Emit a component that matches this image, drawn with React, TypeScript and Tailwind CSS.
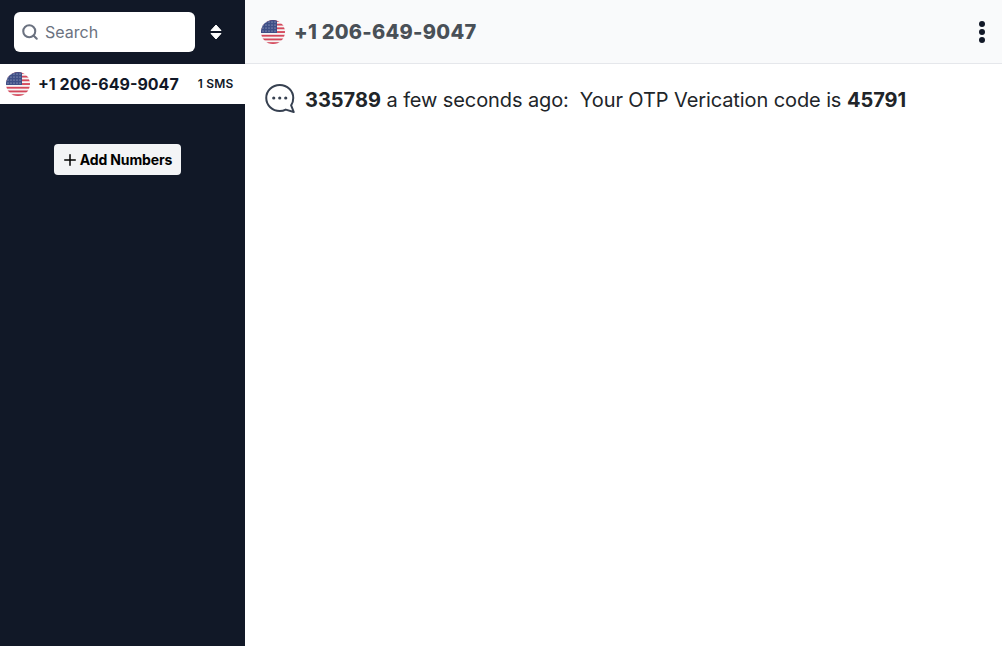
import { Search, Plus } from "lucide-react";

function UsFlag({ className }: { className?: string }) {
  const stripes = [0, 1, 2, 3, 4, 5, 6];
  return (
    <svg className={className} viewBox="0 0 24 24">
      <defs>
        <clipPath id="flagClip">
          <circle cx="12" cy="12" r="12" />
        </clipPath>
      </defs>
      <g clipPath="url(#flagClip)">
        <rect width="24" height="24" fill="#f5f5f5" />
        {stripes.map((i) => (
          <rect key={i} x="0" y={i * 3.7} width="24" height="1.85" fill="#d4475a" />
        ))}
        <rect width="16" height="13" fill="#3f4f86" />
        {[2, 5, 8, 11].map((y) =>
          [2, 5, 8, 11, 14].map((x) => (
            <circle key={`${x}-${y}`} cx={x} cy={y} r="0.55" fill="#c5cbe0" />
          )),
        )}
      </g>
    </svg>
  );
}

function ChatIcon({ className }: { className?: string }) {
  return (
    <svg className={className} viewBox="1 1.5 29.500 29" fill="none" stroke="currentColor" strokeWidth="2" strokeLinejoin="round">
      <path d="M15.5 2.5C8 2.5 2 8.3 2 15.5S8 28.5 15.5 28.5c2.2 0 4.2-.5 6-1.4l8 2.4-2.6-6.6c1.4-2.1 2.1-4.6 2.1-7.4 0-7.200-6-13-13.500-13z" />
      <circle cx="9.500" cy="15.500" r="1.600" fill="currentColor" stroke="none" />
      <circle cx="15.500" cy="15.500" r="1.600" fill="currentColor" stroke="none" />
      <circle cx="21.500" cy="15.500" r="1.600" fill="currentColor" stroke="none" />
    </svg>
  );
}

export default function App() {
  return (
    <div className="flex h-[646px] w-[1002px] overflow-hidden bg-white font-['Inter',sans-serif]">
      {/* Sidebar */}
      <aside className="flex w-[245px] shrink-0 flex-col bg-[#111827]">
        <div className="flex h-16 items-center pl-[14px]">
          <div className="flex h-10 w-[181px] items-center gap-[6px] rounded-md bg-white pl-[7px]">
            <Search className="h-[18px] w-[18px] text-[#6b7280]" strokeWidth={2.75} />
            <span className="text-base text-[#6b7280]">Search</span>
          </div>
          <svg className="ml-[15px] h-4 w-3" viewBox="0 0 12 16" fill="#ffffff" stroke="#ffffff" strokeWidth="1" strokeLinejoin="round">
            <path d="M6 1 11 6.500H1zM1 9.500h10L6 15z" />
          </svg>
        </div>

        <div className="flex h-10 items-center bg-white pl-[6px]">
          <UsFlag className="h-6 w-6" />
          <span className="ml-2 text-base font-bold text-[#111827]">+1 206-649-9047</span>
          <span className="ml-[19px] text-xs font-semibold tracking-[0.2px] text-[#111827]">1 SMS</span>
        </div>

        <div className="mt-10 flex justify-center pr-[10px]">
          <button className="flex h-[31px] w-[127px] items-center justify-center rounded bg-[#f3f4f6] pr-[2px] text-sm font-bold tracking-[-0.15px] text-black">
            <Plus className="mr-[1px] h-[18px] w-[18px]" strokeWidth={2} />
            Add Numbers
          </button>
        </div>
      </aside>

      {/* Main */}
      <main className="flex min-w-0 flex-1 flex-col">
        <header className="flex h-16 items-center justify-between border-b border-[#e5e7eb] bg-[#f9fafb] pl-4 pr-[17px]">
          <div className="flex items-center gap-[9px]">
            <UsFlag className="h-6 w-6" />
            <span className="text-xl font-extrabold tracking-[0.27px] text-[#495057]">+1 206-649-9047</span>
          </div>
          <div className="flex flex-col gap-[2px]">
            <span className="h-[6px] w-[6px] rounded-full bg-[#111827]" />
            <span className="h-[6px] w-[6px] rounded-full bg-[#111827]" />
            <span className="h-[6px] w-[6px] rounded-full bg-[#111827]" />
          </div>
        </header>

        <div className="flex items-start pl-[20px] pt-[20px]">
          <ChatIcon className="h-[29px] w-[30px] text-[#374151]" />
          <p className="ml-[10px] whitespace-pre pt-[2px] text-xl tracking-[-0.1px] text-[#212529]">
            <span className="font-bold tracking-normal">335789</span> a few seconds ago:{"  "}Your OTP Verication code is{" "}
            <span className="font-bold tracking-normal">45791</span>
          </p>
        </div>
      </main>
    </div>
  );
}
